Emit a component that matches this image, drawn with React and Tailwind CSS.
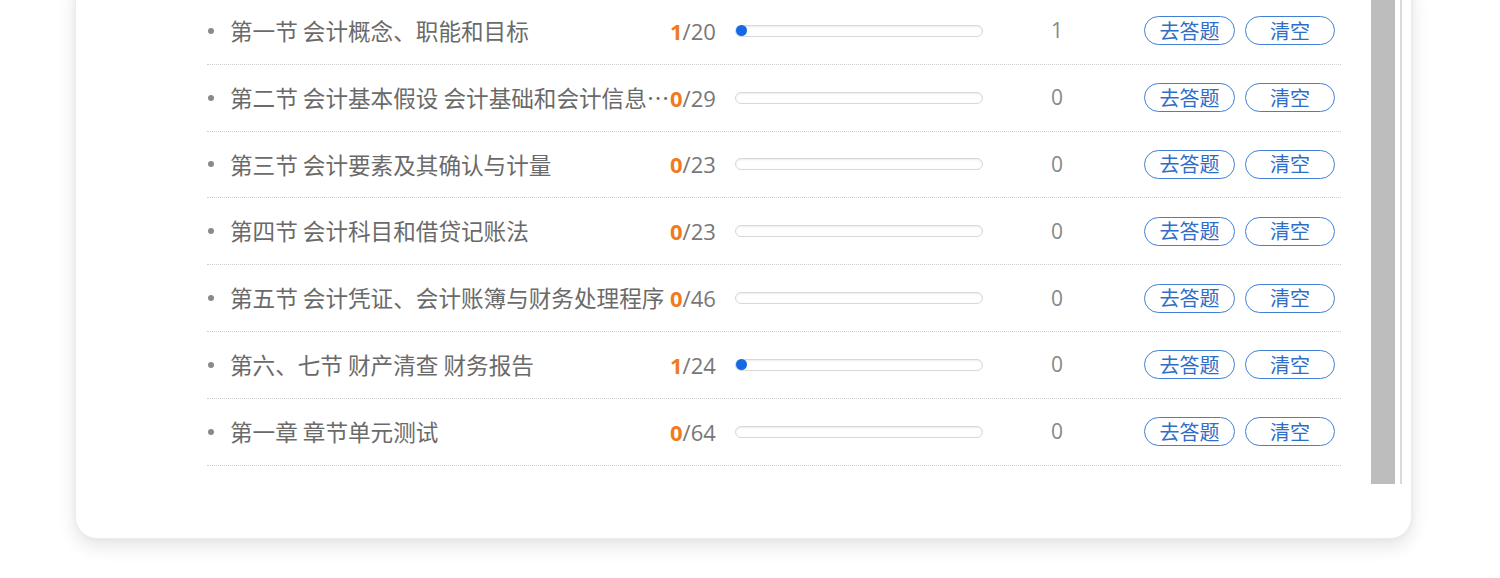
const rows = [
  { title: '第一节 会计概念、职能和目标', done: 1, total: 20, n: 1 },
  { title: '第二节 会计基本假设 会计基础和会计信息质量要求', done: 0, total: 29, n: 0 },
  { title: '第三节 会计要素及其确认与计量', done: 0, total: 23, n: 0 },
  { title: '第四节 会计科目和借贷记账法', done: 0, total: 23, n: 0 },
  { title: '第五节 会计凭证、会计账簿与财务处理程序', done: 0, total: 46, n: 0 },
  { title: '第六、七节 财产清查 财务报告', done: 1, total: 24, n: 0 },
  { title: '第一章 章节单元测试', done: 0, total: 64, n: 0 },
];

const cjk = { fontFamily: '"Noto Sans CJK SC", "Noto Sans", sans-serif' };

function Row({ r }) {
  return (
    <div className="flex items-center h-[66.8px] border-b border-dotted border-[#cfcfcf]">
      <span className="w-[6px] h-[6px] rounded-full bg-[#8a8a8a] ml-[1px]" />
      <div className="ml-[16px] w-[440px] truncate text-[22.6px] text-[#6a6a6a] leading-normal" style={cjk}>
        {r.title}
      </div>
      <div className="w-[65px] text-[22px] leading-none text-[#777]" style={{ fontFamily: '"Open Sans", sans-serif' }}>
        <span className="text-[#f07b1e] font-bold">{r.done}</span>/{r.total}
      </div>
      <div className="relative w-[248px] h-[12px] rounded-full border-[1.5px] border-[#d8d8d8] shadow-[inset_0_1px_2px_rgba(0,0,0,0.08)]">
        {r.done > 0 && (
          <span className="absolute left-[0px] top-[-1px] w-[11px] h-[11px] rounded-full bg-[#1668e3]" />
        )}
      </div>
      <div className="w-[148px] text-center text-[21px] text-[#888] leading-none" style={{ fontFamily: '"Open Sans", sans-serif' }}>
        {r.n}
      </div>
      <div className="ml-[13px] flex gap-[10px]" style={cjk}>
        <button className="w-[91px] h-[29px] rounded-full border-[1.5px] border-[#3f7fd6] text-[#2f6ec7] text-[20px] leading-none flex items-center justify-center bg-white">
          去答题
        </button>
        <button className="w-[90px] h-[29px] rounded-full border-[1.5px] border-[#3f7fd6] text-[#2f6ec7] text-[20px] leading-none flex items-center justify-center bg-white">
          清空
        </button>
      </div>
    </div>
  );
}

export default function App() {
  return (
    <div className="w-[1500px] h-[578px] bg-white overflow-hidden">
      <div className="ml-[75px] w-[1337px] -mt-[30px] bg-white rounded-[22px] border border-[#ececec] shadow-[0_8px_18px_rgba(0,0,0,0.10),0_0_6px_rgba(0,0,0,0.04)] pb-[54px]">
        <div className="flex h-[513px]">
          <div className="pl-[131px] w-[1265px] pt-[27px]">
            {rows.map((r) => (
              <Row key={r.title} r={r} />
            ))}
          </div>
          <div className="ml-[30px] w-[24px] bg-[#bdbdbd]" />
          <div className="ml-[5px] w-[2px] bg-[#d9d9d9]" />
        </div>
      </div>
    </div>
  );
}
